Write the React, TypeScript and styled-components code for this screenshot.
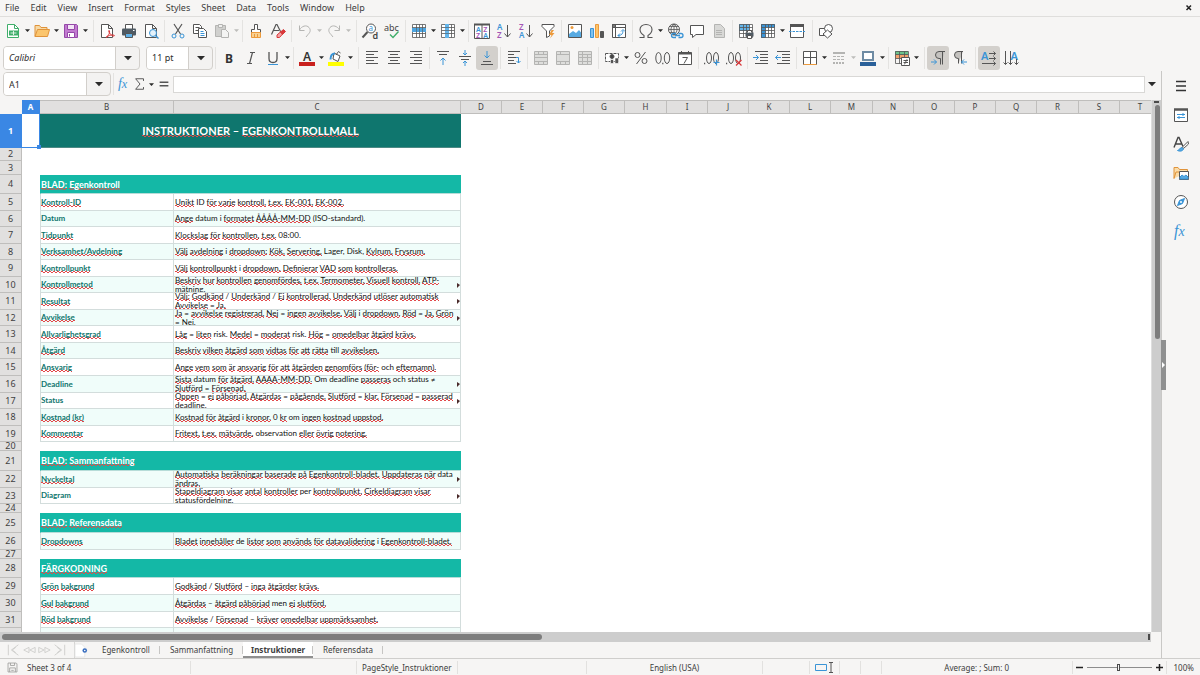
import React from "react";
import styled, { createGlobalStyle, css } from "styled-components";

const ui = `"Noto Sans", "Open Sans", sans-serif`;
const sheetFont = `Lato, "Liberation Sans", sans-serif`;
const ink = "#555555";
const blue = "#3a94d6";
const orange = "#ec9a3c";
const purple = "#a455b5";
const green = "#3fae6a";
const red = "#d9383a";
const grey = "#b4b4b2";

const GlobalStyle = createGlobalStyle`
  *, *::before, *::after { box-sizing: border-box; }
  body { margin: 0; background: #f6f5f4; color: #3d3d3d; font-family: ${ui}; font-size: 9px; }
  button, input { font: inherit; color: inherit; margin: 0; padding: 0; border: 0; background: none; }
`;

const Window = styled.div`
  display: flex;
  flex-direction: column;
  height: 100vh;
  overflow: hidden;
`;

const MenuBar = styled.nav`
  display: flex;
  align-items: center;
  gap: 1px;
  height: 17px;
  border-bottom: 1px solid #dfdedc;
  flex: none;
`;

const MenuItem = styled.button`
  padding: 0 5px;
  line-height: 16px;
`;

const CloseButton = styled.button`
  margin-left: auto;
  margin-right: 7px;
  display: flex;
`;

const Toolbar = styled.div`
  display: flex;
  align-items: center;
  height: 27px;
  padding-left: 2px;
  flex: none;
`;

const ToolButton = styled.button<{ $active?: boolean }>`
  display: flex;
  align-items: center;
  justify-content: center;
  width: 22px;
  height: 24px;
  flex: none;
  border-radius: 3px;
  background: ${(p) => (p.$active ? "#d3d0cc" : "transparent")};
`;

const ArrowButton = styled.button<{ $dim?: boolean; $wide?: boolean }>`
  display: flex;
  align-items: center;
  justify-content: center;
  width: ${(p) => (p.$wide ? 23 : 7)}px;
  height: 22px;
  flex: none;
  color: ${(p) => (p.$dim ? "#bdbdbb" : "#2b2b2b")};
`;

const Separator = styled.span<{ $wide?: boolean }>`
  width: 1px;
  height: 22px;
  margin: 0 2px 0 ${(p) => (p.$wide ? 4 : 2)}px;
  background: #e4e3e1;
  flex: none;
`;

const Combo = styled.div<{ $width: number; $gap?: number }>`
  display: flex;
  width: ${(p) => p.$width}px;
  height: 24px;
  flex: none;
  margin: 0 ${(p) => p.$gap ?? 0}px 0 1px;
  border: 1px solid #d2cfcb;
  border-radius: 4px;
  background: #f3f2f1;
  overflow: hidden;
`;

const ComboInput = styled.input<{ $italic?: boolean }>`
  flex: 1;
  min-width: 0;
  padding-left: 5px;
  background: #ffffff;
  border-right: 1px solid #d2cfcb;
  color: #2e2e2e;
  font-style: ${(p) => (p.$italic ? "italic" : "normal")};
`;

const Middle = styled.div`
  display: flex;
  flex: 1;
  min-height: 0;
`;

const Work = styled.main`
  display: flex;
  flex-direction: column;
  flex: 1;
  min-width: 0;
`;

const FormulaBar = styled.div`
  display: flex;
  align-items: center;
  height: 29px;
  padding: 0 6px 3px 2px;
  flex: none;
`;

const FormulaTool = styled.button<{ $width: number }>`
  display: flex;
  justify-content: center;
  width: ${(p) => p.$width}px;
  flex: none;
`;

const FormulaInput = styled.input`
  flex: 1;
  min-width: 0;
  height: 17px;
  margin-right: 3px;
  padding-left: 3px;
  background: #ffffff;
  border: 1px solid #d9d8d6;
`;

const SheetArea = styled.div`
  display: flex;
  flex: 1;
  min-height: 0;
`;

const SheetView = styled.div`
  flex: 1;
  min-width: 0;
  overflow: hidden;
  background: #ffffff;
`;

const Grid = styled.table`
  table-layout: fixed;
  border-collapse: separate;
  border-spacing: 0;
  width: 100%;

  td, th { padding: 0; }
`;

const Col = styled.col<{ $width: number }>`
  width: ${(p) => p.$width}px;
`;

const header = css`
  background: #e1e0df;
  border-right: 1px solid #bfbebc;
  border-bottom: 1px solid #bfbebc;
  font-weight: 400;
  color: #3f3f3f;
`;

const activeHeader = css`
  background: #3a87e4;
  border-color: #3a87e4;
  color: #ffffff;
  font-weight: 700;
`;

const Corner = styled.td`
  background: #f6f5f4;
`;

const ColHeader = styled.th<{ $active?: boolean }>`
  ${header}
  height: 14px;
  font-size: 8px;
  line-height: 12px;
  border-top: 1px solid #bfbebc;
  ${(p) => p.$active && activeHeader}
`;

const RowHeader = styled.th<{ $active?: boolean }>`
  ${header}
  font-size: 9px;
  line-height: 12px;
  ${(p) => p.$active && activeHeader}
`;

const RowBox = styled.div<{ $height: number }>`
  display: flex;
  align-items: center;
  justify-content: center;
  height: ${(p) => p.$height - 1}px;
  overflow: hidden;
`;

const SelectedCell = styled.td`
  position: relative;
  border-right: 1px solid #3a87e4;
  border-bottom: 1px solid #3a87e4;

  &::after {
    content: "";
    position: absolute;
    right: -2px;
    bottom: -2px;
    width: 4px;
    height: 4px;
    background: #3a87e4;
    z-index: 1;
  }
`;

const TitleCell = styled.td`
  background: #0f766e;
  border-bottom: 1px solid #4d8a85;
  color: #ffffff;
  font: 700 11px ${sheetFont};
`;

const SectionCell = styled.td`
  background: #14b8a6;
  border-bottom: 1px solid #b6dcd8;
  border-left: 1px solid #14b8a6;
  color: #ffffff;
  font: 700 9px ${sheetFont};
`;

const DataCell = styled.td<{ $tint?: boolean; $first?: boolean }>`
  position: relative;
  background: ${(p) => (p.$tint ? "#f0fdfa" : "#ffffff")};
  border-right: 1px solid #d3dddc;
  border-bottom: 1px solid #d3dddc;
  border-left: ${(p) => (p.$first ? "1px solid #d3dddc" : "0")};
  color: ${(p) => (p.$first ? "#0f766e" : "#111111")};
  font: ${(p) => (p.$first ? 700 : 400)} 8px/9px ${sheetFont};
`;

const CellText = styled.div<{ $height: number; $center?: boolean; $indent?: number }>`
  display: flex;
  align-items: center;
  justify-content: ${(p) => (p.$center ? "center" : "flex-start")};
  height: ${(p) => p.$height - 1}px;
  padding-left: ${(p) => p.$indent ?? 0}px;
  overflow: hidden;
  white-space: pre;
`;

const Misspelled = styled.span`
  background:
    linear-gradient(90deg, #e2484a 2px, transparent 2px) 0 calc(100% - 1px) / 4px 1px repeat-x,
    linear-gradient(90deg, #e2484a 2px, transparent 2px) 2px 100% / 4px 1px repeat-x;
`;

const OverflowMark = styled.span`
  position: absolute;
  right: 0;
  top: 6px;
  border-left: 3px solid #4a2a2a;
  border-top: 2px solid transparent;
  border-bottom: 3px solid transparent;
`;

const VScroll = styled.div`
  width: 10px;
  flex: none;
  padding: 1px 2px 0;
  background: #cdcdcd;
  border-left: 1px solid #dedede;
`;

const VCap = styled.div`
  height: 2px;
  background: #4a4a4a;
`;

const VThumb = styled.div`
  height: 44%;
  margin: 2px 0 0 1px;
  width: 5px;
  border-radius: 3px;
  background: #7d7d7d;
`;

const HScroll = styled.div`
  display: flex;
  align-items: center;
  height: 10px;
  flex: none;
  margin-right: 10px;
  padding: 0 1px 0 2px;
  background: #cdcdcd;
`;

const HThumb = styled.div`
  width: 47%;
  height: 6px;
  border-radius: 3px;
  background: #7d7d7d;
`;

const HCap = styled.div`
  width: 2px;
  height: 6px;
  margin-left: auto;
  background: #4a4a4a;
`;

const TabBar = styled.div`
  display: flex;
  align-items: stretch;
  height: 16px;
  flex: none;
  font-size: 8px;
  line-height: 12px;
`;

const TabNav = styled.button`
  display: flex;
  align-items: center;
  justify-content: center;
  width: 15px;
`;

const TabNavGroup = styled.div`
  display: flex;
  padding-left: 6px;
  width: 74px;
`;

const AddSheet = styled.button`
  display: flex;
  align-items: center;
  width: 18px;
  border-left: 1px solid #d6d5d3;
`;

const SheetTab = styled.button<{ $active?: boolean }>`
  display: flex;
  align-items: flex-start;
  padding: 2px ${(p) => (p.$active ? 8 : 10)}px 0;
  position: relative;
  font-weight: ${(p) => (p.$active ? 700 : 400)};
  background: ${(p) => (p.$active ? "#ffffff" : "transparent")};
  box-shadow: ${(p) => (p.$active ? "inset 0 -2px #8f8f8f" : "none")};

  &::after {
    content: "";
    position: absolute;
    right: 0;
    top: 4px;
    height: 8px;
    width: 1px;
    background: #c6c5c3;
  }
`;

const Sidebar = styled.aside`
  position: relative;
  display: flex;
  flex-direction: column;
  align-items: center;
  width: 39px;
  flex: none;
  border-left: 1px solid #c9c8c6;
`;

const SideButton = styled.button`
  display: flex;
  align-items: center;
  justify-content: center;
  width: 22px;
  height: 29px;
`;

const SideHandle = styled.button`
  position: absolute;
  left: -1px;
  top: calc(50% - 25px);
  width: 5px;
  height: 50px;
  background: #8f9090;
  display: flex;
  align-items: center;
`;

const StatusBar = styled.footer`
  display: flex;
  align-items: center;
  height: 17px;
  flex: none;
  border-top: 1px solid #cfcecc;
  font-size: 8px;
`;

const StatusCell = styled.div<{ $grow: number; $start?: boolean }>`
  display: flex;
  align-items: center;
  justify-content: ${(p) => (p.$start ? "flex-start" : "center")};
  gap: 8px;
  flex: ${(p) => p.$grow} 1 0;
  min-width: 0;
  height: 13px;
  padding-left: ${(p) => (p.$start ? 6 : 0)}px;
  border-right: 1px solid #e2e1df;
  white-space: nowrap;

  &:last-child { border-right: 0; }
`;

const ZoomBox = styled(StatusCell)`
  gap: 4px;
`;

const ZoomSlider = styled.input`
  appearance: none;
  width: 65px;
  height: 9px;
  background: linear-gradient(#8d8d8d, #8d8d8d) center / 100% 1px no-repeat;

  &::-webkit-slider-thumb {
    appearance: none;
    width: 3px;
    height: 7px;
    border: 1px solid #4c4c4c;
    background: #f6f5f4;
  }
`;

const Svg = styled.svg`
  display: block;
  flex: none;
  overflow: visible;
  fill: none;
  stroke: ${ink};
  stroke-width: 1;

  text { stroke: none; font-family: ${ui}; }
`;

function Arrow({ size = 5 }: { size?: number }) {
  return (
    <Svg width={size} height={size} viewBox="0 0 6 6" aria-hidden="true">
      <path d="M0 1.5h6l-3 3.2z" fill="currentColor" stroke="none" />
    </Svg>
  );
}

const docPath = "M2.5 1.5h7l4 4v9h-11zM9.500 1.500v4h4";

const textLines = (xs: number[][]) => (
  <path d={xs.map(([x, y, w]) => `M${x} ${y}h${w}`).join("")} />
);

const tableGrid = (
  <path
    strokeWidth=".8"
    d="M1.500 1.500h13v13h-13zM1.500 4.500h13M1.500 7.500h13M1.500 10.500h13M5.500 1.500v13M8.500 1.500v13M11.500 1.500v13"
  />
);

const mergeGrid = (d: string) => (
  <g stroke={grey}>
    <path d="M1.500 1.500h13v13h-13zM1.500 4.500h13M1.500 11.500h13" fill="#dededc" />
    <path d={d} />
  </g>
);

const icons: Record<string, React.ReactNode> = {
  newDoc: (
    <g stroke={green}>
      <path d="M2.500 1.500h7l4 4v9h-11z" fill="#ffffff" />
      <path d="M9.500 1.500v4h4" />
      <path d="M4 7.500h9.500v5H4z" fill={green} stroke="none" />
      <path d="M5.500 10h6M8.500 8v4" stroke="#ffffff" strokeWidth=".8" />
    </g>
  ),
  open: (
    <g stroke="#e0933a">
      <path d="M1 13.500V2.500h4.500l1.500 2h6v2.500" fill="#f7d9a4" />
      <path d="M1 13.500l2.500-7h12l-2 7z" fill="#fbc56d" />
    </g>
  ),
  save: (
    <g stroke="#9548a8">
      <path d="M1.500 1.500h12l1 1v12h-13z" fill="#c27ad0" />
      <path d="M4.500 1.500h7v5h-7z" fill="#f3e4f6" />
      <path d="M4.500 9.500h7v5h-7z" fill="#ffffff" />
      <path d="M6.500 11v2.500" />
    </g>
  ),
  pdf: (
    <>
      <path d={docPath} fill="#ffffff" />
      <path d="M7 14.500c3-2 4-5 3.500-6.500s-1.500 0 0 2 3 3.500 4.500 3-1-1.500-3-1-4 1.500-5 2.500z" stroke={red} />
    </>
  ),
  print: (
    <>
      <path d="M4.500 6V1.500h7V6" fill="#ffffff" />
      <rect x="1" y="5.500" width="14" height="7" rx="1" fill="#4f5a63" stroke="none" />
      <path d="M4.500 10.500h7v4h-7z" fill="#5fb0e6" />
      <path d="M12 7.500h1.500" stroke="#ffffff" />
    </>
  ),
  preview: (
    <>
      <path d={docPath} fill="#ffffff" />
      <circle cx="10" cy="10" r="3.500" stroke={blue} fill="#e4f2fb" />
      <path d="M12.500 12.500l3 3" stroke={blue} strokeWidth="1.400" />
    </>
  ),
  cut: (
    <>
      <path d="M4 1l6.500 10M12 1L5.500 11" strokeWidth="1.200" />
      <circle cx="4" cy="13" r="2" stroke={blue} />
      <circle cx="12" cy="13" r="2" stroke={blue} />
    </>
  ),
  copy: (
    <>
      <path d="M1.500 1.500h6l2 2v7h-8zM3.500 4.500h4M3.500 7.500h4" fill="#ffffff" />
      <path d="M6.500 5.500h5l3 3v6h-8z" fill="#ffffff" />
      <path d="M8.500 8.500h3M8.500 10.500h4M8.500 12.500h4" stroke={blue} />
    </>
  ),
  paste: (
    <g stroke={grey}>
      <path d="M1.500 2.500h10v11h-10z" fill="#d0d0ce" />
      <path d="M4.500 1.500h4v3h-4z" fill="#efefee" />
      <path d="M7.500 6.500h4l3 3v5h-7z" fill="#f4f4f3" />
    </g>
  ),
  brush: (
    <>
      <path d="M6.500 1.500h3v5h3v3h-9v-3h3z" fill="#ffffff" />
      <path d="M3.500 9.500h9v5h-9z" fill="#f8d193" stroke={orange} />
      <path d="M6.500 11v3.500M9.500 11v3.500" stroke={orange} />
    </>
  ),
  clear: (
    <>
      <path d="M1.500 11.500L6 1.500h1l4 8M3.500 7.500h5.500" strokeWidth="1.200" />
      <path d="M7 12l4-3.500 2 2L9.500 14.500H7z" fill="#f4a3a5" stroke={red} />
      <path d="M10.500 9l3-2.500 2 2-3 3z" fill={red} stroke={red} />
    </>
  ),
  undo: <path d="M2.500 2.500v5h5M2.500 7c2-4 7-5.500 9.500-2.500s.500 5.500-1 7L9 14" stroke={grey} />,
  redo: <path d="M13.500 2.500v5h-5M13.500 7c-2-4-7-5.500-9.500-2.500s-.500 5.500 1 7L7 14" stroke={grey} />,
  find: (
    <>
      <circle cx="9" cy="5.500" r="4.500" fill="#ffffff" />
      <path d="M5.500 9l-5 5.500" strokeWidth="2" />
      <text x="6.600" y="8" fontSize="8" fill={blue}>a</text>
      <text x="10.500" y="15.500" fontSize="9" fontWeight="600" fill="#444444">d</text>
    </>
  ),
  spell: (
    <>
      <text x="0" y="7.500" fontSize="9" fill="#444444">abc</text>
      <path d="M6 11.500l3 3 5.500-6" stroke={green} strokeWidth="1.400" />
    </>
  ),
  row: (
    <>
      <path d="M1 1h14v14H1z" fill="#ffffff" stroke="none" />
      {tableGrid}
      <path d="M1 5h14v4H1z" fill="#4da5e0" stroke="none" />
      <path d="M5.500 5v4M8.500 5v4M11.500 5v4" strokeWidth=".6" />
    </>
  ),
  column: (
    <>
      <path d="M1 1h14v14H1z" fill="#ffffff" stroke="none" />
      {tableGrid}
      <path d="M5 1h4v14H5z" fill="#64b5ea" stroke="none" />
      <path d="M5 4.500h4M5 7.500h4M5 10.500h4" strokeWidth=".6" />
    </>
  ),
  sort: (
    <>
      <path d="M.500 1.500h15v14H.500zM8 1.500v14" fill="#ffffff" />
      <path d="M0 1.500h16" strokeWidth="2" />
      <g fontSize="7" fontWeight="600">
        <text x="2" y="9" fill={blue}>A</text>
        <text x="2" y="15" fill={purple}>Z</text>
        <text x="9.300" y="9" fill={purple}>Z</text>
        <text x="9.300" y="15" fill={blue}>A</text>
      </g>
    </>
  ),
  az: (
    <>
      <text x="1" y="7" fontSize="8" fontWeight="600" fill={blue}>A</text>
      <text x="1" y="15" fontSize="8" fontWeight="600" fill={purple}>Z</text>
      <path d="M11.500 2v12M8.500 10.500l3 3.500 3-3.500" />
    </>
  ),
  za: (
    <>
      <text x="1" y="7" fontSize="8" fontWeight="600" fill={purple}>Z</text>
      <text x="1" y="15" fontSize="8" fontWeight="600" fill={blue}>A</text>
      <path d="M11.500 2v12M8.500 10.500l3 3.500 3-3.500" />
    </>
  ),
  filter: (
    <>
      <path d="M2 1.500h12v2l-4.500 4.500v5l-3 1.500V8L2 3.500z" fill="#ffffff" />
      <path d="M11.500 7l-2.500 5h2.500l-1.500 3.500 4.500-5.500h-2.500l2-3z" fill={orange} stroke="none" />
    </>
  ),
  image: (
    <>
      <path d="M1.500 1.500h13v13h-13z" fill="#ffffff" />
      <path d="M2 14v-3l4-3 3 2 3-3 2 2.500V14z" fill="#57aae2" stroke="none" />
      <circle cx="5" cy="4.500" r="1.500" fill={orange} stroke="none" />
    </>
  ),
  chart: (
    <>
      <path d="M1.500 5.500h3v9h-3z" fill="#80c2ee" stroke={blue} />
      <path d="M6.500 1.500h3v13h-3z" fill="#fbc56d" stroke={orange} />
      <path d="M11.500 8.500h3v6h-3z" fill={ink} />
    </>
  ),
  pivot: (
    <>
      <path d="M1.500 1.500h13v13h-13zM1.500 4.500h13M4.500 1.500v13" fill="#ffffff" />
      <path d="M1.500 1.500h3v3h-3z" fill="#777777" />
      <path d="M7 12.500c3.500 0 5-1.500 5-5M10 8.500l2-2 2 2M9 10.500l-2 2 2 2" stroke={blue} />
    </>
  ),
  omega: <path d="M1.500 14.500H6v-2C3.500 11 2 9 2 6.500 2 3.500 4.500 1.500 8 1.500s6 2 6 5c0 2.500-1.500 4.500-4 6v2h4.500" strokeWidth="1.100" />,
  link: (
    <>
      <circle cx="7" cy="6.500" r="5.500" />
      <path strokeWidth=".8" d="M7 1v11M1.500 6.500h11M2.500 3.500h9M2.500 9.500h6M7 1c-4 3-4 8 0 11M7 1c4 3 4 8 0 11" />
      <path d="M9 10.500H6.500a2 2 0 0 0 0 4H9M11.500 10.500H14a2 2 0 0 1 0 4h-2.500M8 12.500h5" stroke={blue} strokeWidth="1.300" />
    </>
  ),
  comment: <path d="M1.500 2.500h13v9H7l-3.500 3v-3h-2z" fill="#ffffff" />,
  headers: <path d="M3.500 1.500h6l4 4v9h-10zM5 7.500h6M5 9.500h6M5 11.500h6" fill="#d8d8d6" stroke={grey} />,
  printArea: (
    <>
      <path d="M1 1h14v14H1z" fill="#ffffff" stroke="none" />
      <path d="M1 1h10.500v7H1z" fill="#64b5ea" stroke="none" />
      {tableGrid}
      <rect x="7.500" y="9.500" width="8" height="4" fill="#4f5a63" stroke="none" />
      <path d="M9.500 9.500v-2h4v2M9.500 12.500h4v3h-4z" fill="#ffffff" />
    </>
  ),
  freeze: (
    <>
      <path d="M1 1h14v14H1z" fill="#ffffff" stroke="none" />
      <path d="M1 1h14v3.500H1zM1 1h4.500v14H1z" fill={blue} stroke="none" />
      {tableGrid}
    </>
  ),
  split: (
    <>
      <path d="M1.500 1.500h13v13h-13z" fill="#ffffff" />
      <path d="M1 2.500h14" strokeWidth="3" />
      <path d="M0 8.500h16" stroke={blue} strokeDasharray="2.500 1" />
    </>
  ),
  shapes: (
    <>
      <path d="M1.500 5.500h6.500v7H1.500z" fill="#ffffff" />
      <circle cx="10.500" cy="5.500" r="4" fill="#ffffff" />
      <path d="M9.500 7l4.500 4-4.500 4-4.500-4z" fill="#ffffff" />
    </>
  ),
  bold: <text x="4" y="12.500" fontSize="12" fontWeight="700" fill="#333333">B</text>,
  italic: <path d="M7 2.500h5M4 13.500h5M9.500 2.500L6.500 13.500" strokeWidth="1.200" />,
  underline: (
    <>
      <path d="M4 2v6.500c0 2.500 1.500 4 4 4s4-1.500 4-4V2" strokeWidth="1.300" />
      <path d="M3 14.500h10" stroke={blue} />
    </>
  ),
  fontColor: (
    <>
      <text x="4" y="10.500" fontSize="12" fontWeight="600" fill="#333333">A</text>
      <path d="M0 14h16" stroke="#c9211e" strokeWidth="4" />
    </>
  ),
  fill: (
    <>
      <path d="M6 3l6 3-2 5.500-5-2.500zM8 5l2.500-3.500 2 1.500" fill="#ffffff" />
      <path d="M2.500 9.500c0-4 1-6 4.500-6" stroke={blue} strokeWidth="2" />
      <path d="M0 14h16" stroke="#ffff00" strokeWidth="4" />
    </>
  ),
  left: textLines([[2, 1.500, 12], [2, 4.500, 8], [2, 7.500, 12], [2, 10.500, 8], [2, 13.500, 12]]),
  center: textLines([[2, 1.500, 12], [4, 4.500, 8], [2, 7.500, 12], [4, 10.500, 8], [2, 13.500, 12]]),
  right: textLines([[2, 1.500, 12], [6, 4.500, 8], [2, 7.500, 12], [6, 10.500, 8], [2, 13.500, 12]]),
  top: (
    <>
      {textLines([[2, 1.500, 12], [4, 4.500, 8]])}
      <path d="M8 15V8M5.500 10.500L8 8l2.500 2.500" stroke={blue} />
    </>
  ),
  middle: (
    <>
      {textLines([[2, 6.500, 12], [4, 9.500, 8]])}
      <path d="M8 0v5M6 3l2 2 2-2M8 16v-5M6 13l2-2 2 2" stroke={blue} />
    </>
  ),
  bottom: (
    <>
      {textLines([[4, 11.500, 8], [2, 14.500, 12]])}
      <path d="M8 1v7M5.500 5.500L8 8l2.500-2.500" stroke={blue} />
    </>
  ),
  wrap: (
    <>
      {textLines([[2, 1.500, 12], [2, 4.500, 6], [2, 7.500, 8], [2, 10.500, 6], [2, 13.500, 8]])}
      <path d="M10 7.500h2.500v5.500M10.500 11l2 2 2-2" stroke={blue} />
    </>
  ),
  merge: mergeGrid("M1.500 7.500h13M5.500 1.500v3M10.500 1.500v3M5.500 11.500v3M10.500 11.500v3"),
  mergeCenter: mergeGrid("M5.500 1.500v3M5.500 11.500v3M10.500 11.500v3"),
  unmerge: mergeGrid("M5.500 1.500v13M10.500 4.500v10M1.500 7.500h13"),
  currency: (
    <>
      <path d="M1.500 3.500h13v8h-13z" fill="#ffffff" strokeDasharray="3 1" />
      <circle cx="8" cy="6.500" r="2" fill="#444444" />
      <path d="M6.500 9.500h3v4h-3zM11 8h3.500v5.500H11z" fill={ink} stroke="#ffffff" strokeWidth=".6" />
    </>
  ),
  percent: (
    <>
      <circle cx="4.500" cy="5" r="2.500" />
      <circle cx="11.500" cy="11" r="2.500" />
      <path d="M12.500 2l-9 12" />
    </>
  ),
  number: (
    <>
      <ellipse cx="3.500" cy="8" rx="2.700" ry="5.500" />
      <ellipse cx="12" cy="8" rx="2.700" ry="5.500" />
      <path d="M7.200 13.500h1.200" strokeWidth="1.400" />
    </>
  ),
  date: (
    <>
      <path d="M1.500 2.500h13v12h-13zM4.500 1v3M11.500 1v3" fill="#ffffff" />
      <path d="M1.500 3.500h13" strokeWidth="2" />
      <path d="M5.500 7.500h5l-3.500 6" />
    </>
  ),
  addDecimal: (
    <>
      <path d="M0 13.500h1.200" strokeWidth="1.400" />
      <ellipse cx="5" cy="8" rx="2.500" ry="5.500" />
      <ellipse cx="12" cy="8" rx="2.500" ry="5.500" />
      <path d="M12.500 9.500v6M9.500 12.500h6" stroke={blue} strokeWidth="1.200" />
    </>
  ),
  delDecimal: (
    <>
      <path d="M0 13.500h1.200" strokeWidth="1.400" />
      <ellipse cx="5" cy="8" rx="2.500" ry="5.500" />
      <ellipse cx="12" cy="8" rx="2.500" ry="5.500" />
      <path d="M10 10l5.500 5.500M15.500 10L10 15.500" stroke={red} strokeWidth="1.200" />
    </>
  ),
  indent: (
    <>
      {textLines([[2, 1.500, 13], [7, 4.500, 8], [7, 7.500, 8], [7, 10.500, 8], [2, 13.500, 13]])}
      <path d="M0 7.500h5.500M3 5l2.500 2.500L3 10" stroke={blue} />
    </>
  ),
  outdent: (
    <>
      {textLines([[2, 1.500, 13], [7, 4.500, 8], [7, 7.500, 8], [7, 10.500, 8], [2, 13.500, 13]])}
      <path d="M.500 7.500h5.500M3 5L.500 7.500 3 10" stroke={blue} />
    </>
  ),
  borders: (
    <>
      <path d="M1.500 1.500h13v13h-13zM8.500 1.500v13M1.500 7.500h13" fill="#ffffff" />
      <path d="M1.500 14.500h13" stroke={orange} />
    </>
  ),
  borderStyle: (
    <g stroke={grey}>
      <path d="M2 3h12" strokeWidth="2" />
      <path d="M2 6.500h12M2 9.500h12" strokeDasharray="3 1" />
      <path d="M2 13h12" strokeWidth="2" strokeDasharray="2 1" />
    </g>
  ),
  borderColor: (
    <>
      <path d="M3 2h10v8H3z" fill="#ffffff" stroke="#6e8ba3" strokeWidth="2" />
      <path d="M0 14h16" stroke="#2a6099" strokeWidth="4" />
    </>
  ),
  conditional: (
    <>
      <path d="M1 1h13v4H1z" fill="#6bc28a" stroke="none" />
      <path d="M1 5h13v3.500H1z" fill="#f3a06b" stroke="none" />
      <path strokeWidth=".8" d="M1.500 1.500h13v12h-13zM1.500 4.500h13M1.500 8.500h13M5.500 1.500v12M10.500 1.500v12" />
      <path d="M7.500 7.500h8v8h-8z" fill="#ffffff" />
      <path d="M9.500 10.500h4.500M9.500 12.500h4.500M13 9.300l-2.500 5" />
    </>
  ),
  ltr: (
    <>
      <path d="M15 1.500H9a3.500 3.500 0 0 0 0 7h1.500V14.500M12.500 1.500v13" fill="#c4c2bf" />
      <path d="M1 12h5.500M4 9.500L6.500 12 4 14.500" stroke={blue} />
    </>
  ),
  rtl: (
    <>
      <path d="M11 1.500H6a3.500 3.500 0 0 0 0 7h.5v5M9.500 1.500v12" fill="#c4c2bf" />
      <path d="M15 12H9.500M12 9.500L9.500 12l2.500 2.500" stroke={blue} />
    </>
  ),
  horizontalText: (
    <>
      <text x="0" y="10" fontSize="11" fontWeight="600" fill={blue}>A</text>
      <path d="M8 3.500h6.500M8 8.500h6.500M1 13.500h13.500M12.500 1.500l2 2-2 2M12.500 6.500l2 2-2 2M12.500 11.500l2 2-2 2" />
    </>
  ),
  verticalText: (
    <>
      <text x="7.500" y="10" fontSize="11" fontWeight="600" fill={blue}>A</text>
      <path d="M2.500 1v13.500M7.500 1v13.500M13.500 9v5.500M.500 12.500l2 2 2-2M5.500 12.500l2 2 2-2M11.500 12.500l2 2 2-2" />
    </>
  ),
  fx: (
    <text x="1" y="13" fontSize="16" fontStyle="italic" fill={blue} style={{ fontFamily: '"Liberation Serif", serif' }}>
      f<tspan fontSize="14">x</tspan>
    </text>
  ),
  sigma: <path d="M12 4.500V2H3l5 6-5 6h9v-2.500" strokeWidth="1.100" />,
  equals: <path d="M3 6h10M3 10h10" strokeWidth="1.800" />,
  hamburger: <path d="M3 3.500h10M3 8h10M3 12.500h10" strokeWidth="1.500" stroke="#333333" />,
  properties: (
    <>
      <path d="M1.500 2.500h13v12h-13z" fill="#ffffff" />
      <path d="M1 2.500h14" strokeWidth="2.500" />
      <path d="M4 7.500h8M4 10.500h8M10 6v3M6 9v3" stroke={blue} />
    </>
  ),
  styles: (
    <>
      <path d="M1 11.500L5 1.500h1l4 9M2.500 8h6" strokeWidth="1.400" stroke="#444444" />
      <path d="M15 5.500L9.500 11l1 1.500L15.500 8z" fill="#ffffff" />
      <path d="M4.500 14.500c2 0 2-3 4.500-3l1.500 1.500c-1 2.500-4 2.500-6 1.500z" fill="#57aae2" stroke={blue} />
    </>
  ),
  gallery: (
    <>
      <path d="M1 13.500V2.500h4l1.500 2h8v2.500M1 13.500L3 7h3" fill="#f9dcaa" stroke="#e0933a" />
      <path d="M6.500 6.500h9v8h-9z" fill="#ffffff" />
      <path d="M7 14v-2l2-2 2 1.500 2-1.500 2 2v2z" fill="#57aae2" stroke={blue} />
    </>
  ),
  navigator: (
    <>
      <circle cx="8" cy="8" r="6.500" fill="#ffffff" />
      <path d="M11.500 4.500l-2 5-5 2 2-5z" fill={blue} stroke={blue} />
      <circle cx="8" cy="8" r="1" fill="#ffffff" stroke="none" />
    </>
  ),
  first: <path d="M1.500 2v12M13 2L5 8l8 6M10 5L6 8l4 3" stroke="#cccbc9" />,
  prev: <path d="M8 5L2 8l6 3zM15 5L9 8l6 3z" stroke="#cccbc9" />,
  next: <path d="M2 5l6 3-6 3zM9 5l6 3-6 3z" stroke="#cccbc9" />,
  last: <path d="M14.500 2v12M3 2l8 6-8 6M6 5l4 3-4 3" stroke="#cccbc9" />,
  addSheet: (
    <>
      <path d="M0 0h8l4 4v12H0z" fill="#ffffff" stroke="#e4e4e4" />
      <circle cx="12" cy="8" r="2.800" fill="#3a6fc0" stroke="none" />
      <circle cx="12" cy="8" r="1" fill="#ffffff" stroke="none" />
    </>
  ),
  disk: (
    <path d="M2.500 2.500h10l1 1v10h-11zM5.500 2.500v3h5v-3M4.500 13.500v-5h7v5M6.500 11.500h3" stroke="#9b9b99" />
  ),
  close: <path d="M3 3l9 9M12 3l-9 9" stroke="#222222" strokeWidth="3" />,
};

function Icon({ name, size = 16 }: { name: string; size?: number }) {
  return (
    <Svg width={size} height={size} viewBox="0 0 16 16" aria-hidden="true">
      {icons[name]}
    </Svg>
  );
}

type Tool = { icon: string; label: string; menu?: boolean; dim?: boolean; active?: boolean } | "|" | "||";

const t = (icon: string, label: string, extra: object = {}): Tool => ({ icon, label, ...extra });
const menu = { menu: true };

const standardTools: Tool[] = [
  t("newDoc", "New", menu), t("open", "Open", menu), t("save", "Save", menu), "||",
  t("pdf", "Export as PDF"), t("print", "Print"), t("preview", "Print Preview"), "|",
  t("cut", "Cut"), t("copy", "Copy"), t("paste", "Paste", { menu: true, dim: true }), "|",
  t("brush", "Clone Formatting"), t("clear", "Clear Formatting"), "|",
  t("undo", "Undo", { menu: true, dim: true }), t("redo", "Redo", { menu: true, dim: true }), "||",
  t("find", "Find and Replace"), t("spell", "Spelling"), "|",
  t("row", "Row", menu), t("column", "Column", menu), "|",
  t("sort", "Sort"), t("az", "Sort Ascending"), t("za", "Sort Descending"), t("filter", "AutoFilter"), "|",
  t("image", "Insert Image"), t("chart", "Insert Chart"), t("pivot", "Pivot Table"), "|",
  t("omega", "Special Character", menu), t("link", "Hyperlink"), t("comment", "Comment"), t("headers", "Headers and Footers"), "|",
  t("printArea", "Define Print Area"), t("freeze", "Freeze Panes", menu), t("split", "Split Window"), "||",
  t("shapes", "Draw Functions"),
];

const formatTools: Tool[] = [
  t("bold", "Bold"), t("italic", "Italic"), t("underline", "Underline", menu), "|",
  t("fontColor", "Font Color", menu), t("fill", "Background Color", menu), "||",
  t("left", "Align Left"), t("center", "Center Horizontally"), t("right", "Align Right"), "|",
  t("top", "Align Top"), t("middle", "Center Vertically"), t("bottom", "Align Bottom", { active: true }), "|",
  t("wrap", "Wrap Text"), "|",
  t("merge", "Merge and Center"), t("mergeCenter", "Merge Cells"), t("unmerge", "Unmerge Cells"), "|",
  t("currency", "Currency", menu), t("percent", "Percent"), t("number", "Number"), t("date", "Date"), "|",
  t("addDecimal", "Add Decimal Place"), t("delDecimal", "Delete Decimal Place"), "|",
  t("indent", "Increase Indent"), t("outdent", "Decrease Indent"), "|",
  t("borders", "Borders", menu), t("borderStyle", "Border Style", { menu: true, dim: true }), t("borderColor", "Border Color", menu), "|",
  t("conditional", "Conditional Formatting", menu), "||",
  t("ltr", "Left-To-Right", { active: true }), t("rtl", "Right-To-Left"), "||",
  t("horizontalText", "Text Left to Right", { active: true }), t("verticalText", "Text Top to Bottom"),
];

function Tools({ items }: { items: Tool[] }) {
  return (
    <>
      {items.map((item, i) =>
        typeof item === "string" ? (
          <Separator key={i} $wide={item === "||"} />
        ) : (
          <React.Fragment key={i}>
            <ToolButton type="button" aria-label={item.label} aria-pressed={item.active} $active={item.active}>
              <Icon name={item.icon} />
            </ToolButton>
            {item.menu && (
              <ArrowButton type="button" aria-label={`${item.label} options`} $dim={item.dim}>
                <Arrow size={5} />
              </ArrowButton>
            )}
          </React.Fragment>
        )
      )}
    </>
  );
}

type Row = { n: number; h: number; title?: string; section?: string; label?: string; lines?: string[]; tint?: boolean };

const rows: Row[] = [
  { n: 1, h: 34, title: "INSTRUKTIONER – EGENKONTROLLMALL" },
  { n: 2, h: 13 },
  { n: 3, h: 14 },
  { n: 4, h: 19, section: "BLAD: Egenkontroll" },
  { n: 5, h: 17, label: "Kontroll-ID", lines: ["Unikt ID för varje kontroll, t.ex. EK-001, EK-002."] },
  { n: 6, h: 16, tint: true, label: "Datum", lines: ["Ange datum i formatet ÅÅÅÅ-MM-DD (ISO-standard)."] },
  { n: 7, h: 17, label: "Tidpunkt", lines: ["Klockslag för kontrollen, t.ex. 08:00."] },
  { n: 8, h: 16, tint: true, label: "Verksamhet/Avdelning", lines: ["Välj avdelning i dropdown: Kök, Servering, Lager, Disk, Kylrum, Frysrum."] },
  { n: 9, h: 17, label: "Kontrollpunkt", lines: ["Välj kontrollpunkt i dropdown. Definierar VAD som kontrolleras."] },
  { n: 10, h: 16, tint: true, label: "Kontrollmetod", lines: ["Beskriv hur kontrollen genomfördes, t.ex. Termometer, Visuell kontroll, ATP-", "mätning."] },
  { n: 11, h: 17, label: "Resultat", lines: ["Välj: Godkänd / Underkänd / Ej kontrollerad. Underkänd utlöser automatisk", "Avvikelse = Ja."] },
  { n: 12, h: 16, tint: true, label: "Avvikelse", lines: ["Ja = avvikelse registrerad, Nej = ingen avvikelse. Välj i dropdown. Röd = Ja, Grön", "= Nej."] },
  { n: 13, h: 17, label: "Allvarlighetsgrad", lines: ["Låg = liten risk. Medel = moderat risk. Hög = omedelbar åtgärd krävs."] },
  { n: 14, h: 16, tint: true, label: "Åtgärd", lines: ["Beskriv vilken åtgärd som vidtas för att rätta till avvikelsen."] },
  { n: 15, h: 17, label: "Ansvarig", lines: ["Ange vem som är ansvarig för att åtgärden genomförs (för- och efternamn)."] },
  { n: 16, h: 17, tint: true, label: "Deadline", lines: ["Sista datum för åtgärd, ÅÅÅÅ-MM-DD. Om deadline passeras och status ≠", "Slutförd = Försenad."] },
  { n: 17, h: 16, label: "Status", lines: ["Öppen = ej påbörjad, Åtgärdas = pågående, Slutförd = klar, Försenad = passerad", "deadline."] },
  { n: 18, h: 17, tint: true, label: "Kostnad (kr)", lines: ["Kostnad för åtgärd i kronor. 0 kr om ingen kostnad uppstod."] },
  { n: 19, h: 16, label: "Kommentar", lines: ["Fritext, t.ex. mätvärde, observation eller övrig notering."] },
  { n: 20, h: 9 },
  { n: 21, h: 20, section: "BLAD: Sammanfattning" },
  { n: 22, h: 17, tint: true, label: "Nyckeltal", lines: ["Automatiska beräkningar baserade på Egenkontroll-bladet. Uppdateras när data", "ändras."] },
  { n: 23, h: 16, label: "Diagram", lines: ["Stapeldiagram visar antal kontroller per kontrollpunkt. Cirkeldiagram visar", "statusfördelning."] },
  { n: 24, h: 9 },
  { n: 25, h: 20, section: "BLAD: Referensdata" },
  { n: 26, h: 17, tint: true, label: "Dropdowns", lines: ["Bladet innehåller de listor som används för datavalidering i Egenkontroll-bladet."] },
  { n: 27, h: 9 },
  { n: 28, h: 19, section: "FÄRGKODNING" },
  { n: 29, h: 17, label: "Grön bakgrund", lines: ["Godkänd / Slutförd – inga åtgärder krävs."] },
  { n: 30, h: 17, tint: true, label: "Gul bakgrund", lines: ["Åtgärdas – åtgärd påbörjad men ej slutförd."] },
  { n: 31, h: 16, label: "Röd bakgrund", lines: ["Avvikelse / Försenad – kräver omedelbar uppmärksamhet."] },
  { n: 32, h: 17, tint: true, label: "", lines: [""] },
];

const dictionary = new Set(
  "id datum i iso-standard lager disk risk till och deadline status om observation data per men de diagram".split(" ")
);

function Spelled({ text }: { text: string }) {
  return (
    <span>
      {text.split(/( )/).map((word, i) => {
        const bare = word.replace(/^\(/, "").replace(/[.,:)]+$/, "").toLowerCase();
        const fine = !/[a-zåäö]/.test(bare) || dictionary.has(bare);
        return fine ? word : <Misspelled key={i}>{word}</Misspelled>;
      })}
    </span>
  );
}

const letters = "ABCDEFGHIJKLMNOPQRST".split("");
const widths = letters.map((_, i) => (i === 0 ? 18 : i === 1 ? 134 : i === 2 ? 287 : i % 5 === 2 ? 42 : 41));

function SheetRow({ row }: { row: Row }) {
  const first = row.n === 1;
  return (
    <tr>
      <RowHeader scope="row" $active={first}>
        <RowBox $height={row.h}>{row.n <= 31 && row.n}</RowBox>
      </RowHeader>
      {first ? <SelectedCell /> : <td />}
      {row.title && (
        <TitleCell colSpan={2}>
          <CellText $height={row.h} $center><Spelled text={row.title} /></CellText>
        </TitleCell>
      )}
      {row.section && (
        <SectionCell colSpan={2}>
          <CellText $height={row.h}><Spelled text={row.section} /></CellText>
        </SectionCell>
      )}
      {row.lines && (
        <>
          <DataCell $first $tint={row.tint}>
            <CellText $height={row.h}><Spelled text={row.label ?? ""} /></CellText>
          </DataCell>
          <DataCell $tint={row.tint}>
            <CellText $height={row.h} $indent={1}>
              <div>
                {row.lines.map((line) => (
                  <div key={line}><Spelled text={line} /></div>
                ))}
              </div>
            </CellText>
            {row.lines.length > 1 && <OverflowMark />}
          </DataCell>
        </>
      )}
    </tr>
  );
}

export default function App() {
  return (
    <Window>
      <GlobalStyle />
      <MenuBar aria-label="Main menu">
        {["File", "Edit", "View", "Insert", "Format", "Styles", "Sheet", "Data", "Tools", "Window", "Help"].map((m) => (
          <MenuItem type="button" key={m}>{m}</MenuItem>
        ))}
        <CloseButton type="button" aria-label="Close document"><Icon name="close" size={8} /></CloseButton>
      </MenuBar>
      <Toolbar role="toolbar" aria-label="Standard"><Tools items={standardTools} /></Toolbar>
      <Toolbar role="toolbar" aria-label="Formatting">
        <Combo $width={137} $gap={5}>
          <ComboInput aria-label="Font name" defaultValue="Calibri" $italic />
          <ArrowButton type="button" aria-label="Font list" $wide><Arrow size={8} /></ArrowButton>
        </Combo>
        <Combo $width={67}>
          <ComboInput aria-label="Font size" defaultValue="11 pt" />
          <ArrowButton type="button" aria-label="Size list" $wide><Arrow size={8} /></ArrowButton>
        </Combo>
        <Separator />
        <Tools items={formatTools} />
      </Toolbar>
      <Middle>
        <Work>
          <FormulaBar>
            <Combo $width={108}>
              <ComboInput aria-label="Name box" defaultValue="A1" />
              <ArrowButton type="button" aria-label="Name list" $wide><Arrow size={8} /></ArrowButton>
            </Combo>
            <Separator />
            <FormulaTool type="button" aria-label="Function wizard" $width={16}><Icon name="fx" size={14} /></FormulaTool>
            <FormulaTool type="button" aria-label="Sum" $width={16}><Icon name="sigma" size={14} /></FormulaTool>
            <ArrowButton type="button" aria-label="Sum options"><Arrow /></ArrowButton>
            <FormulaTool type="button" aria-label="Formula" $width={18}><Icon name="equals" size={14} /></FormulaTool>
            <FormulaInput aria-label="Formula input" />
            <ArrowButton type="button" aria-label="Expand formula bar"><Arrow size={8} /></ArrowButton>
          </FormulaBar>
          <SheetArea>
            <SheetView>
              <Grid>
                <colgroup>
                  <Col $width={22} />
                  {widths.map((w, i) => <Col key={i} $width={w} />)}
                  <col />
                </colgroup>
                <thead>
                  <tr>
                    <Corner />
                    {letters.map((l, i) => <ColHeader key={l} scope="col" $active={i === 0}>{l}</ColHeader>)}
                  </tr>
                </thead>
                <tbody>
                  {rows.map((row) => <SheetRow key={row.n} row={row} />)}
                </tbody>
              </Grid>
            </SheetView>
            <VScroll><VCap /><VThumb /></VScroll>
          </SheetArea>
          <HScroll><HThumb /><HCap /></HScroll>
          <TabBar>
            <TabNavGroup>
              <TabNav type="button" aria-label="First sheet"><Icon name="first" size={14} /></TabNav>
              <TabNav type="button" aria-label="Previous sheet"><Icon name="prev" size={14} /></TabNav>
              <TabNav type="button" aria-label="Next sheet"><Icon name="next" size={14} /></TabNav>
              <TabNav type="button" aria-label="Last sheet"><Icon name="last" size={14} /></TabNav>
            </TabNavGroup>
            <AddSheet type="button" aria-label="Add sheet"><Icon name="addSheet" size={13} /></AddSheet>
            {["Egenkontroll", "Sammanfattning", "Instruktioner", "Referensdata"].map((s) => (
              <SheetTab type="button" key={s} $active={s === "Instruktioner"}>{s}</SheetTab>
            ))}
          </TabBar>
        </Work>
        <Sidebar>
          {[
            ["hamburger", "Sidebar settings"],
            ["properties", "Properties"],
            ["styles", "Styles"],
            ["gallery", "Gallery"],
            ["navigator", "Navigator"],
            ["fx", "Functions"],
          ].map(([icon, label]) => (
            <SideButton type="button" key={label} aria-label={label}><Icon name={icon} /></SideButton>
          ))}
          <SideHandle type="button" aria-label="Hide sidebar">
            <Svg width="4" height="6" viewBox="0 0 4 6" aria-hidden="true">
              <path d="M1 0l3 3-3 3z" fill="#ffffff" stroke="none" />
            </Svg>
          </SideHandle>
        </Sidebar>
      </Middle>
      <StatusBar>
        <StatusCell $grow={187} $start><Icon name="disk" size={13} />Sheet 3 of 4</StatusCell>
        <StatusCell $grow={167} />
        <StatusCell $grow={101}>PageStyle_Instruktioner</StatusCell>
        <StatusCell $grow={130} />
        <StatusCell $grow={178}>English (USA)</StatusCell>
        <StatusCell $grow={46} />
        <StatusCell $grow={30}>
          <Svg width="20" height="11" viewBox="0 0 20 11" aria-hidden="true">
            <path d="M1.500 2.500h11v6h-11z" stroke={blue} />
            <path d="M15 .500h4M15 10.500h4M17 .500v10" />
          </Svg>
        </StatusCell>
        <StatusCell $grow={20} />
        <StatusCell $grow={20} />
        <StatusCell $grow={193}>Average: ; Sum: 0</StatusCell>
        <ZoomBox $grow={95}>
          <Svg width="7" height="7" viewBox="0 0 7 7" aria-hidden="true"><path d="M0 3.500h7" stroke="#222222" strokeWidth="1.500" /></Svg>
          <ZoomSlider type="range" aria-label="Zoom" min={0} max={100} defaultValue={48} />
          <Svg width="7" height="7" viewBox="0 0 7 7" aria-hidden="true"><path d="M0 3.500h7M3.500 0v7" stroke="#222222" strokeWidth="1.500" /></Svg>
        </ZoomBox>
        <StatusCell $grow={33}>100%</StatusCell>
      </StatusBar>
    </Window>
  );
}
